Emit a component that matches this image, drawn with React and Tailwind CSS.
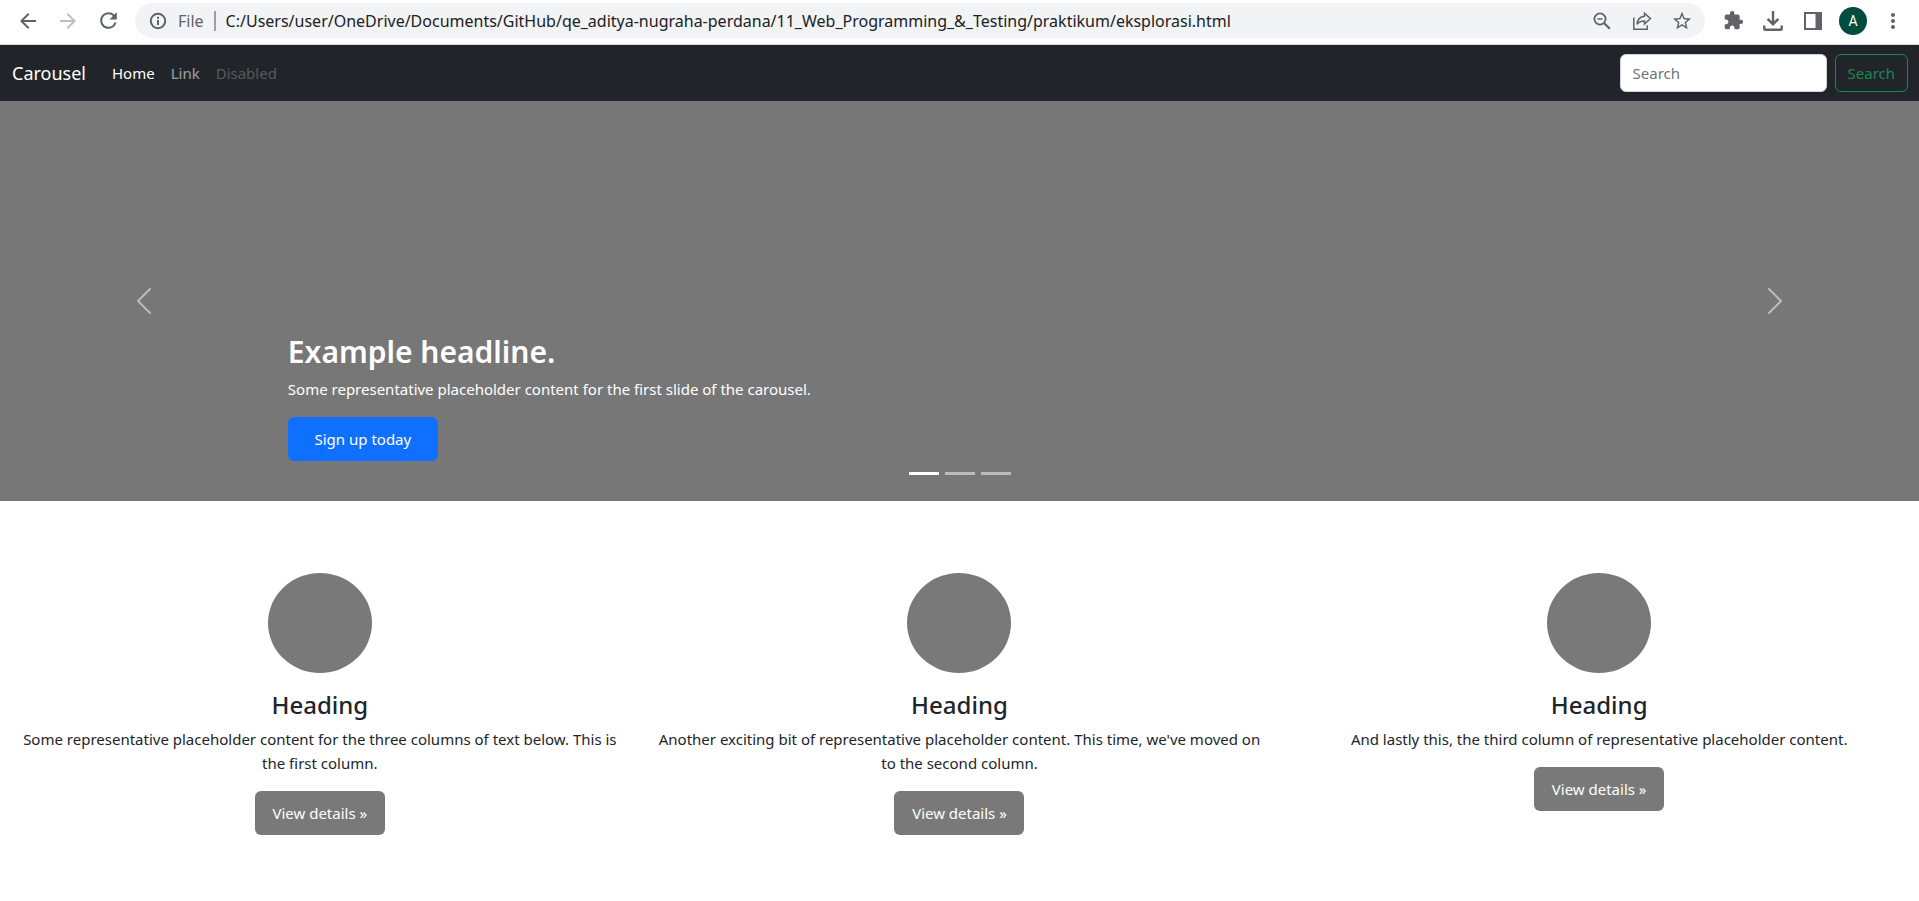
import { MdArrowBack, MdArrowForward, MdRefresh, MdStarBorder, MdExtension, MdMoreVert } from "react-icons/md";
import { BsChevronLeft, BsChevronRight } from "react-icons/bs";

const columns = [
  "Some representative placeholder content for the three columns of text below. This is the first column.",
  "Another exciting bit of representative placeholder content. This time, we've moved on to the second column.",
  "And lastly this, the third column of representative placeholder content.",
];

function IconButton({ label, className = "", children }) {
  return (
    <button type="button" aria-label={label} className={`flex h-8 w-10 shrink-0 items-center justify-center ${className}`}>
      {children}
    </button>
  );
}

function InfoIcon() {
  return (
    <svg width="18" height="18" viewBox="0 0 18 18" fill="none" stroke="currentColor" strokeWidth="2" className="shrink-0">
      <circle cx="9" cy="9" r="7.2" />
      <path d="M9 8v5M9 4.800v2" />
    </svg>
  );
}

function ZoomOutIcon() {
  return (
    <svg width="18" height="18" viewBox="0 0 18 18" fill="none" stroke="currentColor" strokeWidth="1.8">
      <circle cx="7" cy="7" r="5.600" />
      <path d="M11.200 11.200l5.600 5.600" strokeWidth="2.2" />
      <path d="M4.500 7h5" strokeWidth="1.500" />
    </svg>
  );
}

function ShareIcon() {
  return (
    <svg width="20" height="20" viewBox="0 0 20 20" fill="none" stroke="currentColor" strokeWidth="1.5">
      <path d="M1.800 6.500v11.700h13.400v-4" />
      <path d="M12.500 2.200l6 5.400-6 5.400v-3c-3.600 0-6 1-7.500 3.300.4-4.500 3-7.600 7.500-8.100z" />
    </svg>
  );
}

function DownloadIcon() {
  return (
    <svg width="20" height="20" viewBox="0 0 20 20" fill="none" stroke="currentColor" strokeWidth="2.4">
      <path d="M10 0v13" />
      <path d="M4.600 7.800L10 13.200l5.400-5.400" />
      <path d="M1.300 14.500v3q0 1.300 1.300 1.300h14.800q1.300 0 1.300-1.300v-3" />
    </svg>
  );
}

function SidePanelIcon() {
  return (
    <svg width="18" height="18" viewBox="0 0 18 18" fill="currentColor">
      <path fillRule="evenodd" d="M0 0h18v18H0zM2 2v14h9.500V2z" />
    </svg>
  );
}

function BrowserBar() {
  return (
    <div className="flex h-[45px] items-center border-b border-[#dadce0] bg-white pt-px pr-[6px] pb-1 pl-2 text-[#5f6368]">
      <IconButton label="Back"><MdArrowBack size={24} /></IconButton>
      <IconButton label="Forward" className="text-[#bbbdbf]"><MdArrowForward size={24} /></IconButton>
      <IconButton label="Reload"><MdRefresh size={25} /></IconButton>
      <div className="ml-[7px] flex h-[35px] min-w-0 flex-1 items-center rounded-full bg-[#f1f3f4] pr-[3px] pl-[14px]">
        <InfoIcon />
        <span className="ml-[11px] text-base">File</span>
        <span className="mx-[10px] h-5 w-[2px] shrink-0 bg-[#9aa0a6]" />
        <input
          aria-label="Address"
          className="min-w-0 flex-1 bg-transparent text-base text-[#202124] outline-none"
          defaultValue="C:/Users/user/OneDrive/Documents/GitHub/qe_aditya-nugraha-perdana/11_Web_Programming_&_Testing/praktikum/eksplorasi.html"
        />
        <IconButton label="Zoom"><ZoomOutIcon /></IconButton>
        <IconButton label="Share"><ShareIcon /></IconButton>
        <IconButton label="Bookmark"><MdStarBorder size={22} /></IconButton>
      </div>
      <IconButton label="Extensions" className="ml-2"><MdExtension size={21} /></IconButton>
      <IconButton label="Downloads"><DownloadIcon /></IconButton>
      <IconButton label="Side panel"><SidePanelIcon /></IconButton>
      <IconButton label="Profile">
        <span className="flex h-7 w-7 items-center justify-center rounded-full bg-[#004d40] font-['Roboto',sans-serif] text-sm text-white">A</span>
      </IconButton>
      <IconButton label="Menu"><MdMoreVert size={24} /></IconButton>
    </div>
  );
}

function Navbar() {
  return (
    <nav className="flex h-14 items-center justify-between bg-[#212529] pr-[11px] pl-3">
      <div className="flex items-center">
        <a href="#" className="mr-[26px] text-lg leading-8 text-white">Carousel</a>
        <div className="flex items-center gap-4 text-[15px]">
          <a href="#" className="text-white">Home</a>
          <a href="#" className="text-white/55">Link</a>
          <a href="#" aria-disabled="true" className="text-white/25">Disabled</a>
        </div>
      </div>
      <form className="flex gap-2 text-[15px]" onSubmit={(e) => e.preventDefault()}>
        <input
          type="search"
          aria-label="Search"
          placeholder="Search"
          className="h-[38px] w-[207px] rounded-md border border-[#ced4da] bg-white px-3 text-[#212529] outline-none placeholder:text-[#6c757d]"
        />
        <button type="submit" className="h-[38px] rounded-md border border-[#198754] px-3 text-[#198754]">Search</button>
      </form>
    </nav>
  );
}

function Carousel() {
  return (
    <section className="relative flex h-[400px] items-end bg-[#777777] px-[15%] pb-10 text-white">
      <div>
        <h1 className="mb-[7px] text-3xl leading-9 font-semibold">Example headline.</h1>
        <p className="mb-4 text-[15px] leading-6">Some representative placeholder content for the first slide of the carousel.</p>
        <a href="#" className="inline-flex h-11 w-[150px] items-center justify-center rounded-md bg-[#0f6fff] text-[15px]">Sign up today</a>
      </div>
      <button type="button" aria-label="Previous" className="absolute inset-y-0 left-0 flex w-[15%] items-center justify-center opacity-50">
        <BsChevronLeft size={32} />
      </button>
      <button type="button" aria-label="Next" className="absolute inset-y-0 right-0 flex w-[15%] items-center justify-center opacity-50">
        <BsChevronRight size={32} />
      </button>
      <div className="absolute inset-x-0 bottom-[26px] flex justify-center gap-[6px]">
        <button type="button" aria-label="Slide 1" className="h-[3px] w-[30px] bg-white" />
        <button type="button" aria-label="Slide 2" className="h-[3px] w-[30px] bg-white/50" />
        <button type="button" aria-label="Slide 3" className="h-[3px] w-[30px] bg-white/50" />
      </div>
    </section>
  );
}

export default function App() {
  return (
    <div className="min-h-screen bg-white font-['Noto_Sans','Open_Sans',sans-serif] text-[#212529]">
      <BrowserBar />
      <Navbar />
      <main>
        <Carousel />
        <div className="grid grid-cols-3 pt-[72px]">
          {columns.map((text) => (
            <article key={text} className="flex flex-col items-center px-3 text-center">
              <div className="h-[100px] w-[104px] rounded-[50%] bg-[#797979]" />
              <h2 className="mt-[17px] mb-[7px] text-2xl leading-[30px] font-medium">Heading</h2>
              <p className="mb-4 text-[15px] leading-6">{text}</p>
              <a href="#" className="inline-flex h-11 w-[130px] items-center justify-center rounded-md bg-[#797979] text-[15px] text-white">View details »</a>
            </article>
          ))}
        </div>
      </main>
    </div>
  );
}
